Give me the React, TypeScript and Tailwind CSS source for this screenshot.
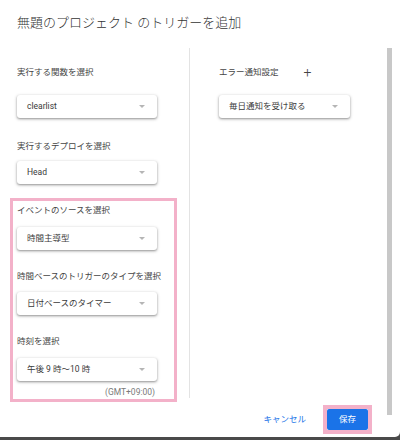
import React from "react";

const FONT = { fontFamily: 'Roboto, "Noto Sans CJK JP", sans-serif' };

function Arrow() {
  return (
    <svg width="6" height="3" viewBox="0 0 6 3" className="shrink-0">
      <path d="M0 0 L6 0 L3 3 Z" fill="#b5b5b5" />
    </svg>
  );
}

function Select({ value, width = "w-[140px]" }: { value: string; width?: string }) {
  return (
    <div
      className={`${width} h-[23px] flex items-center justify-between pl-[10px] pr-[12px] bg-white rounded-[3px] shadow-[0_1px_2px_rgba(0,0,0,0.3),0_1px_3px_1px_rgba(0,0,0,0.12)] text-[8.5px] text-[#3a3a3a]`}
    >
      <span>{value}</span>
      <Arrow />
    </div>
  );
}

function Label({ children, className = "" }: { children: React.ReactNode; className?: string }) {
  return <div className={`h-[12px] leading-[12px] text-[8.5px] text-[#444] ${className}`}>{children}</div>;
}

export default function App() {
  return (
    <div className="h-[440px] w-[400px] bg-[#4a4a4a]" style={FONT}>
      <div className="relative h-[437px] w-[400px] bg-white rounded-br-[5px] flex flex-col">
        {/* title */}
        <div className="pl-[17px] pt-[14px] h-[48px] leading-[18px] text-[13px] font-light text-[#333]">
          無題のプロジェクト のトリガーを追加
        </div>

        <div className="flex items-start">
          {/* left column */}
          <div className="w-[189px] pl-[10px] pt-[18px]">
            <div className="pl-[7px]">
              <Label>実行する関数を選択</Label>
              <div className="mt-[17px]">
                <Select value="clearlist" />
              </div>
              <Label className="mt-[22px]">実行するデプロイを選択</Label>
              <div className="mt-[9px]">
                <Select value="Head" />
              </div>
            </div>

            <div className="mt-[14px] w-[167px] border-[3px] border-[#f3b1c9] px-[4px] pt-[3px] pb-[2px]">
              <Label>イベントのソースを選択</Label>
              <div className="mt-[11px]">
                <Select value="時間主導型" />
              </div>
              <Label className="mt-[20px]">時間ベースのトリガーのタイプを選択</Label>
              <div className="mt-[10px]">
                <Select value="日付ベースのタイマー" />
              </div>
              <Label className="mt-[20px]">時刻を選択</Label>
              <div className="mt-[11px]">
                <Select value="午後 9 時～10 時" />
              </div>
              <div className="mt-[6px] w-[140px] pr-[2px] h-[10px] leading-[10px] text-right text-[8.5px] text-[#7a7a7a]">
                (GMT+09:00)
              </div>
            </div>
          </div>

          {/* divider */}
          <div className="w-px h-[350px] bg-[#e3e3e3]" />

          {/* right column */}
          <div className="pl-[29px] pt-[18px]">
            <div className="flex items-center h-[12px]">
              <Label>エラー通知設定</Label>
              <span className="ml-[25px] text-[14px] leading-[12px] font-light text-[#444]">+</span>
            </div>
            <div className="mt-[17px]">
              <Select value="毎日通知を受け取る" width="w-[131px]" />
            </div>
          </div>
        </div>

        {/* footer */}
        <div className="mt-[3px] flex items-center justify-end pr-[28px]">
          <span className="text-[8.5px] text-[#1a73e8] mr-[17px]">キャンセル</span>
          <div className="border-[4px] border-[#f3b1c9]">
            <div className="w-[41px] h-[21px] flex items-center justify-center bg-[#1a73e8] rounded-[2px] text-white text-[8.5px]">
              保存
            </div>
          </div>
        </div>

        {/* scrollbar */}
        <div className="absolute left-[387px] top-[48px] w-[5px] h-[367px] bg-[#c8c8c8]" />
      </div>
    </div>
  );
}
